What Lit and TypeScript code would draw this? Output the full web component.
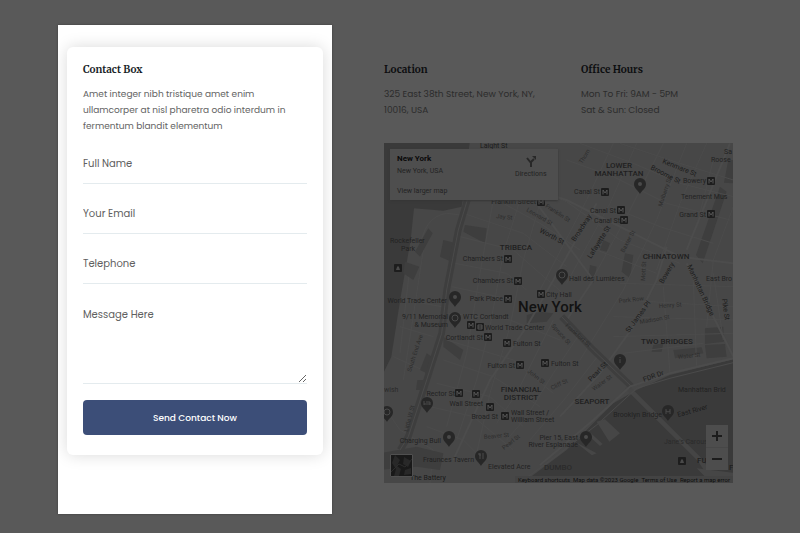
import { LitElement, html, svg, css } from "lit";
import { customElement } from "lit/decorators.js";

type Label = [x: number, y: number, text: string, cls?: string, rotate?: number];

const LABELS: Label[] = [
  [96, 5, "Laight St", "street"],
  [235, 25, "LOWER", "area"],
  [235, 33, "MANHATTAN", "area"],
  [132, 107, "TRIBECA", "area"],
  [282, 116, "CHINATOWN", "area"],
  [283, 201, "TWO BRIDGES", "area"],
  [137, 249, "FINANCIAL", "area"],
  [137, 257, "DISTRICT", "area"],
  [208, 261, "SEAPORT", "area"],
  [166, 169, "New York", "city"],
  [216, 51, "Canal St", "poi end"],
  [232, 70, "Canal St", "poi end"],
  [236, 80, "Canal St", "poi end"],
  [322, 40, "Bowery", "poi end"],
  [297, 56, "Tenement Mus", "poi"],
  [322, 74, "Grand St", "poi end"],
  [340, 11, "Sa", "poi"],
  [327, 19, "Roose", "poi"],
  [152, 61, "Franklin Street", "poi end"],
  [119, 118, "Chambers St", "poi end"],
  [129, 140, "Chambers St", "poi end"],
  [119, 158, "Park Place", "poi end"],
  [162, 154, "City Hall", "poi"],
  [185, 138, "Hall des Lumières", "poi"],
  [63, 160, "World Trade Center", "poi end"],
  [64, 176, "9/11 Memorial", "poi end"],
  [64, 184, "& Museum", "poi end"],
  [79, 176, "WTC Cortlandt", "poi"],
  [101, 187, "World Trade Center", "poi"],
  [99, 197, "Cortlandt St", "poi end"],
  [129, 203, "Fulton St", "poi"],
  [131, 225, "Fulton St", "poi end"],
  [167, 223, "Fulton St", "poi"],
  [71, 253, "Rector St", "poi end"],
  [99, 263, "Wall Street", "poi end"],
  [114, 276, "Broad St", "poi end"],
  [127, 272, "Wall Street /", "poi"],
  [127, 279, "William Street", "poi"],
  [57, 300, "Charging Bull", "poi end"],
  [90, 319, "Fraunces Tavern", "poi end"],
  [26, 337, "The Battery", "poi dark"],
  [104, 326, "Elevated Acre", "poi"],
  [194, 297, "Pier 15, East", "poi end"],
  [194, 304, "River Esplanade", "poi end"],
  [278, 274, "Brooklyn Bridge", "poi end"],
  [294, 249, "Manhattan Brid", "poi"],
  [280, 301, "Jane's Carousel", "poi faint"],
  [313, 320, "FULTON", "area start"],
  [345, 327, "F", "area start"],
  [322, 138, "East Bro", "poi"],
  [6, 100, "Rockefeller", "poi"],
  [17, 108, "Park", "poi"],
  [0, 249, "wish", "poi faint"],
  [160, 327, "DUMBO", "area start faint"],
  [112, 75, "Jay St", "tiny", 6],
  [142, 68, "Leonard St", "tiny", 30],
  [161, 64, "Franklin St", "tiny", 33],
  [155, 89, "Worth St", "street", 28],
  [191, 99, "Broadway", "street", -57],
  [207, 116, "Lafayette St", "street", -58],
  [240, 110, "Baxter St", "tiny", -62],
  [198, 21, "Thom", "tiny", -58],
  [278, 20, "Kenmare St", "street", 22],
  [266, 26, "Broome St", "street", 27],
  [278, 64, "Mulberry St", "tiny", -72],
  [279, 141, "Bowery", "street", -60],
  [261, 138, "Mott St", "tiny", -87],
  [303, 123, "Manhattan Bridge", "street", 65],
  [338, 156, "Pike St", "street", 82],
  [235, 160, "Park Row", "tiny", -6],
  [275, 165, "Henry St", "tiny", -4],
  [256, 181, "Madison St", "tiny", -10],
  [245, 190, "St James Pl", "street", -54],
  [294, 216, "Water St", "tiny", -6],
  [207, 239, "Pearl St", "street", -46],
  [210, 248, "Water St", "tiny", -36],
  [260, 239, "FDR Dr", "street", -20],
  [294, 274, "East River", "street", -15],
  [167, 183, "Spruce St", "tiny", 48],
  [181, 183, "Frankfort St", "tiny", 42],
  [143, 229, "John St", "tiny", 38],
  [168, 247, "Cliff St", "tiny", -26],
  [100, 296, "Beaver St", "tiny", -5],
  [120, 307, "Pearl St", "tiny", -38],
  [27, 229, "South End Ave", "tiny", -72],
  [24, 289, "Little W St", "tiny", -76],
];

/* Subway stops */
const STOPS: [number, number][] = [
  [221, 49], [237, 67], [240, 77], [327, 38], [327, 71], [157, 59], [124, 116],
  [134, 138], [124, 156], [157, 151], [87, 182], [104, 194], [123, 200],
  [136, 222], [161, 220], [75, 250], [92, 251], [106, 264], [121, 273],
];

/* Pin tips */
const PINS: [number, number, string][] = [
  [256, 51, "dot"], [178, 142, "ring"], [71, 164, "dot"], [71, 185, "ring"],
  [43, 270, "bed"], [65, 304, "dot"], [97, 323, "fork"], [236, 227, "info"],
  [202, 304, "dot"], [284, 278, "arch"], [3, 279, "ring"],
];

const pinGlyph = (kind: string) => {
  switch (kind) {
    case "ring": return svg`<circle cy="-10" r="3" class="pin-line"/>`;
    case "bed": return svg`<path d="M-3-12v4M-3-9h6v1M-1-11h4v2" class="pin-line"/>`;
    case "fork": return svg`<path d="M-1-13v6M2-13v6M-2-13v2h2" class="pin-line"/>`;
    case "info": return svg`<path d="M0-13v1M0-11v4" class="pin-line"/>`;
    case "arch": return svg`<path d="M-2-7v-5M2-7v-5M-2-10q2 2 4 0" class="pin-line"/>`;
    default: return svg`<circle cy="-10" r="2" class="pin-dot"/>`;
  }
};

@customElement("city-map")
export class CityMap extends LitElement {
  static styles = css`
    :host { display: block; position: relative; overflow: hidden; background: #474747;
      font-family: Roboto, "Liberation Sans", sans-serif; font-size: 7px; line-height: 10px; color: #232323; }
    .canvas { display: block; width: 100%; height: auto; }
    a { color: inherit; text-decoration: none; }
    .water { fill: #3a3a3a; }
    .park { fill: #3e3e3e; }
    .pier { fill: #464646; }
    .lane { fill: none; stroke: #4b4b4b; stroke-width: 3; }
    .road { fill: none; stroke: #4c4c4c; stroke-width: 6; }
    .highway { fill: none; stroke: #3e3e3e; stroke-width: 20; }
    .median { fill: none; stroke: #4a4a4a; stroke-width: 3; }
    .bridge { fill: none; stroke: #454545; stroke-width: 14; }
    .poi { font-size: 7px; fill: #222; }
    .area { font-size: 8px; font-weight: 500; fill: #1f1f1f; text-anchor: middle; }
    .city { font-size: 15px; font-weight: 500; fill: #121212; text-anchor: middle; }
    .street { font-size: 7px; fill: #1c1c1c; }
    .tiny { font-size: 6px; fill: #2d2d2d; }
    .end { text-anchor: end; }
    .start { text-anchor: start; }
    .faint { fill: #2b2b2b; }
    .dark { fill: #1a1a1a; }
    .stop { fill: #1d1d1d; }
    .stop-m { fill: none; stroke: #565656; stroke-width: 1; }
    .pin { fill: #272727; }
    .pin-dot { fill: #4a4a4a; }
    .pin-line { fill: none; stroke: #4a4a4a; stroke-width: 1; }
    .info { position: absolute; top: 6px; left: 6px; width: 48%; height: 51px; box-sizing: border-box;
      padding: 5px 11px 5px 7px; display: flex; justify-content: space-between; background: #4e4e4e;
      box-shadow: 0 1px 2px #363636; }
    .place { display: flex; flex-direction: column; align-items: flex-start; }
    .place strong { color: #0a0a0a; font-size: 8px; font-weight: 700; margin-bottom: 2px; }
    .larger { margin-top: 10px; }
    .directions { display: flex; flex-direction: column; align-items: center; gap: 2px; padding-top: 1px; }
    .arrow { width: 12px; height: 12px; }
    .arrow path { fill: none; stroke: #282828; stroke-width: 2; }
    .arrow .head { fill: #282828; stroke: none; }
    .zoom { position: absolute; right: 5px; bottom: 13px; width: 22px; display: flex; flex-direction: column;
      background: #4d4d4d; }
    .zoom button { height: 22px; padding: 0; border: 0; background: none; display: grid; place-items: center; }
    .zoom button + button { border-top: 1px solid #474747; height: 23px; }
    .zoom svg { width: 10px; height: 10px; stroke: #1c1c1c; stroke-width: 2; }
    .layers { position: absolute; left: 6px; bottom: 6px; width: 23px; height: 23px; padding: 0;
      border: 1px solid #505050; border-radius: 1px; background: #191919; overflow: hidden; }
    .layers svg { display: block; width: 21px; height: 21px; }
    .credits { position: absolute; right: 0; bottom: 0; padding: 0 3px; display: flex; gap: 3px;
      font-size: 6px; line-height: 7px; color: #0e0e0e; background: #434343; white-space: nowrap; }
  `;

  render() {
    return html`
      <svg class="canvas" viewBox="0 0 349 340" role="img" aria-label="Map of New York">
        <g transform="translate(-4 -3) scale(.3333)">
          <path class="water" d="M0 0H270L245 200 190 212 102 205 92 300 62 470 34 650 0 720Z"/>
          <path class="water" d="M1070 655L870 705 770 750 700 790 560 930 420 1035H1070Z"/>
          <path class="lane" d="M120 330Q130 230 200 220L240 225M90 380L60 640M130 330L95 560L70 720M40 650L150 700M60 560L160 590M75 480L185 500M60 870L160 930L150 1030M12 800L60 870"/>
          <path class="park" d="M190 300L228 310 215 365 180 350ZM255 255L320 265 315 310 250 275ZM735 340L760 345 750 415 725 395ZM630 375L650 380 640 430 625 415ZM975 565L1030 560 1032 605 975 612ZM975 615L1035 612 1040 650 980 655ZM75 365L118 380 100 420 70 400ZM145 265L158 280 120 350 105 335ZM880 630L965 622 970 640 885 655ZM820 615L850 610 845 635 815 635ZM440 525L480 515 520 520 500 545 440 550ZM190 590L250 630 240 660 190 620ZM120 690L140 640 155 650 140 700ZM0 940L110 920 190 940 180 990 110 980 0 990ZM670 300L690 310 680 335 660 330ZM112 720L135 720 125 750 108 750Z"/>
          <path class="park" d="M1020 140L1040 155 968 370 948 345ZM1045 60L1070 60V130L1032 128Z"/>
          <path class="lane" d="M270 60L560 185L720 300L900 370M260 130L480 250L600 330M250 220L430 280L560 380M240 290L400 330L560 470M225 370L380 400L440 450M215 440L400 480M205 520L390 540L540 600M200 600L400 660L520 760M190 660L340 710L480 800M170 730L330 770L430 860M150 800L280 830L400 930M140 860L250 900L330 980"/>
          <path class="lane" d="M340 180L300 400L260 640L200 860M420 180L370 340L330 560L290 720L230 900M480 190L430 360L390 560L330 760L290 940M700 10L620 180L480 450M770 10L690 190L560 430M850 10L740 230L620 450M920 10L830 240L730 450L600 660M980 10L900 190L830 390M520 540L470 640L410 760L350 850M600 580L520 700L440 830L380 900M660 640L560 770L450 900"/>
          <path class="lane" d="M560 60L700 110L860 190L1050 240M600 10L760 70L900 130L1060 170M720 10L900 70L1060 120M690 200L840 260L1000 310M650 330L830 400M720 430L1060 440M730 480L1060 500M700 530L1060 540M700 590L1060 580M730 640L970 610M850 440L870 700M940 420L950 680M1000 400L1030 600M1000 60L960 220M1060 200L1000 360L980 560"/>
          <path class="road" d="M650 190L560 350L440 560L330 720L220 960M470 190L640 420L560 540M860 320L830 420L760 560L660 700L540 830M920 370L1060 650M270 90L560 180L900 350L1060 370M1050 10L920 330"/>
          <path class="highway" d="M262 180L235 270 200 450 185 580 140 720 85 890 60 930"/>
          <path class="median" d="M262 180L235 270 200 450 185 580 140 720 85 890 60 930"/>
          <path class="bridge" d="M740 740L960 960 1010 1035"/>
          <path class="highway" d="M545 530L640 630 755 740"/>
          <path class="median" d="M545 530L640 630 755 740M1060 668L870 715 770 745 650 855 520 955 430 1020"/>
          <path class="road" d="M1060 655L870 700 750 740 640 840 480 975"/>
          <path class="pier" d="M650 845L675 838 720 880 688 905ZM618 880L628 875 668 912 660 918ZM585 905L650 940 636 946Z"/>
          <path class="pier" d="M1000 1035L950 985 1070 1000V1035Z"/>
        </g>
        ${LABELS.map(([x, y, text, cls = "poi", r = 0]) => svg`
          <text class=${cls} x=${x} y=${y} transform="rotate(${r} ${x} ${y})">${text}</text>`)}
        ${STOPS.map(([x, y]) => svg`
          <g transform="translate(${x} ${y})">
            <rect class="stop" x="-4" y="-4" width="8" height="8" rx="1"/>
            <path class="stop-m" d="M-2 2.5V-2L0 1 2-2V2.5"/>
          </g>`)}
        <g transform="translate(96 184)">
          <rect class="stop" x="-4" y="-4" width="8" height="8" rx="1"/>
          <path class="stop-m" d="M-2-2h4v4h-4zM-2 0h4"/>
        </g>
        ${[[14, 125], [298, 318]].map(([x, y]) => svg`
          <g transform="translate(${x} ${y})">
            <rect class="stop" x="-4" y="-4" width="8" height="8" rx="1"/>
            <path class="pin-dot" d="M-2 2L-1-1 0-2 1-1 2 2Z"/>
          </g>`)}
        ${PINS.map(([x, y, kind]) => svg`
          <g transform="translate(${x} ${y})">
            <path class="pin" d="M0 0C-1-3-6-5-6-10A6 6 0 0 1 6-10C6-5 1-3 0 0Z"/>
            ${pinGlyph(kind)}
          </g>`)}
      </svg>

      <div class="info">
        <div class="place">
          <strong>New York</strong>
          <span>New York, USA</span>
          <a class="larger" href="#map">View larger map</a>
        </div>
        <a class="directions" href="#directions">
          <svg class="arrow" viewBox="0 0 12 12" aria-hidden="true">
            <path d="M6 12V7L9 4M6 8L2 3"/>
            <path class="head" d="M7 1H11V5Z"/>
          </svg>
          Directions
        </a>
      </div>

      <button class="layers" aria-label="Show satellite imagery">
        <svg viewBox="0 0 21 21" aria-hidden="true">
          <path fill="#282828" d="M4 0L9 5 6 11 10 14 8 21H3L5 14 1 8ZM13 2L20 6 17 12 12 9ZM14 15L20 13V19L13 20Z"/>
          <path fill="none" stroke="#2c2c2c" d="M0 17L8 9 14 12 21 4"/>
        </svg>
      </button>

      <div class="zoom">
        <button aria-label="Zoom in"><svg viewBox="0 0 10 10"><path d="M0 5H10M5 0V10"/></svg></button>
        <button aria-label="Zoom out"><svg viewBox="0 0 10 10"><path d="M0 5H10"/></svg></button>
      </div>

      <div class="credits">
        <a href="#keys">Keyboard shortcuts</a>
        <span>Map data ©2023 Google</span>
        <a href="#terms">Terms of Use</a>
        <a href="#report">Report a map error</a>
      </div>
    `;
  }
}

@customElement("app-root")
export class AppRoot extends LitElement {
  static styles = css`
    :host { display: block; min-height: 100vh; box-sizing: border-box; background: #595959;
      font-family: Poppins, Inter, "Open Sans", sans-serif; font-size: 9px; line-height: 16px; color: #2c2c2c; }
    main { display: grid; grid-template-columns: minmax(0, 274fr) minmax(0, 349fr); column-gap: 52px;
      padding: 25px 67px 19px 58px; }
    h2 { margin: 0 0 8px; font: 700 10px/16px Merriweather, "Noto Serif", "DejaVu Serif Condensed", "DejaVu Serif", serif; color: #0d0e10; }
    p { margin: 0; }
    .spotlight { background: #fff; padding: 22px 9px 59px; box-shadow: 0 0 2px #3c3c3c; overflow: hidden; }
    .card { background: #fff; border-radius: 6px; padding: 15px 16px 20px; box-shadow: 0 0 16px #00000026; color: #636363; }
    .card h2 { color: #1b1f29; }
    form { display: flex; flex-direction: column; gap: 10px; margin-top: 10px; }
    input, textarea { display: block; width: 100%; box-sizing: border-box; margin: 0; padding: 0; border: 0;
      border-bottom: 1px solid #e4ebee; border-radius: 0; outline: 0; background: none;
      font: 10px/16px Poppins, Inter, "Open Sans", sans-serif; color: #555; }
    input { height: 40px; }
    textarea { height: 90px; padding-top: 13px; resize: vertical; }
    ::placeholder { color: #606060; opacity: 1; }
    .send { height: 35px; margin-top: 6px; padding: 0; border: 0; border-radius: 4px; background: #3c4e78; color: #fff;
      font: 500 9px/16px Poppins, Inter, "Open Sans", sans-serif; }
    .details { padding-top: 37px; }
    .facts { display: grid; grid-template-columns: 197fr 152fr; margin-bottom: 25px; }
  `;

  render() {
    return html`
      <main>
        <section class="spotlight">
          <div class="card">
            <h2>Contact Box</h2>
            <p>Amet integer nibh tristique amet enim<br>ullamcorper at nisl pharetra odio interdum in<br>fermentum blandit elementum</p>
            <form @submit=${(e: Event) => e.preventDefault()}>
              <input type="text" name="name" placeholder="Full Name" aria-label="Full Name">
              <input type="email" name="email" placeholder="Your Email" aria-label="Your Email">
              <input type="tel" name="phone" placeholder="Telephone" aria-label="Telephone">
              <textarea name="message" placeholder="Message Here" aria-label="Message Here"></textarea>
              <button class="send" type="submit">Send Contact Now</button>
            </form>
          </div>
        </section>
        <section class="details">
          <div class="facts">
            <div>
              <h2>Location</h2>
              <p>325 East 38th Street, New York, NY,<br>10016, USA</p>
            </div>
            <div>
              <h2>Office Hours</h2>
              <p>Mon To Fri: 9AM - 5PM<br>Sat &amp; Sun: Closed</p>
            </div>
          </div>
          <city-map></city-map>
        </section>
      </main>
    `;
  }
}
